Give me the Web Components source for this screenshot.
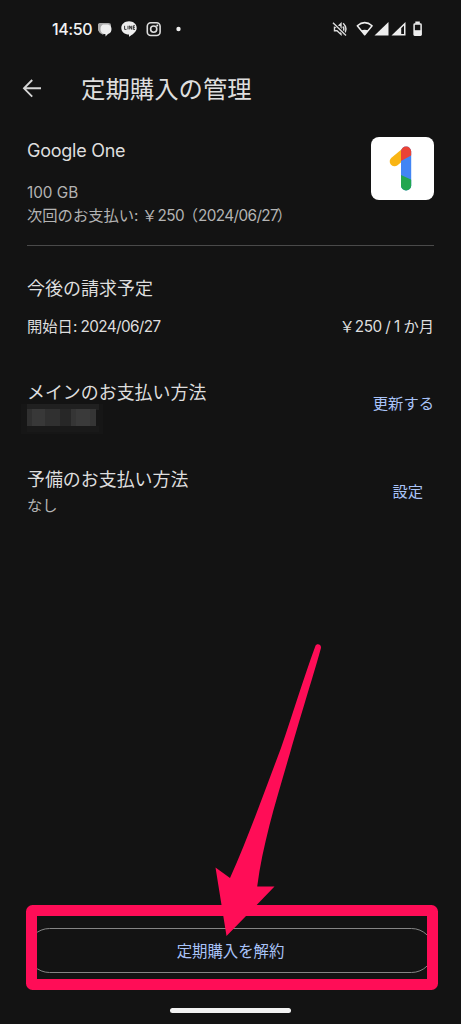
<!DOCTYPE html>
<html lang="ja">
<head>
<meta charset="utf-8">
<title>定期購入の管理</title>
<style>
html,body{margin:0;background:#131313}
body{width:461px;height:1024px;overflow:hidden;font-family:"Noto Sans CJK JP",sans-serif;color:#dedede}
</style>
</head>
<body>
<subscription-screen></subscription-screen>
<script>
function define(name, html){
  const t=document.createElement('template');
  t.innerHTML=html;
  customElements.define(name,class extends HTMLElement{
    constructor(){super();this.attachShadow({mode:'open'}).append(t.content.cloneNode(true));}
  });
}
/* Latin run: own face and tracking inside Japanese text */
define('latin-run',`<style>:host{display:inline;line-height:0;font-family:Inter,"Noto Sans CJK JP",sans-serif;letter-spacing:var(--track,0)}</style><slot></slot>`);

define('status-bar',`<style>
:host{display:block;height:58px;position:relative}
svg{display:block}
.row{display:flex;align-items:center;height:58px;padding-left:52px;box-sizing:border-box}
.time{font:500 16px/20px Inter,sans-serif;letter-spacing:-.4px;width:46px;color:#f2f2f2;white-space:nowrap}
</style>
<div class="row"><span class="time">14:50</span>
<svg width="325" height="24" viewBox="98 17 325 24" fill="#eee">
<path d="M100 23h8.500q2.500 0 2.500 2.300v5q0 2.300-2.500 2.300h-3.500l-2 2.200q-5.500-2-5.500-7.800 0-4 2.500-4z" fill="#aaa"/>
<path d="M103 24.500h5q3.500 1 3.500 4.500 0 4-3.500 5l-2.500 2.500v-2.200q-5-.5-5-5 0-3.800 2.500-4.800z"/>
<path d="M129 21.300c4.300 0 7.700 2.800 7.700 6.600 0 4-4.500 6.600-7.700 8.900v-2.300c-4.300 0-7.700-2.800-7.700-6.600s3.400-6.600 7.700-6.600z"/>
<path d="M124.600 25.800v3.600h1.900M128 25.800v3.600M129.700 29.400v-3.600l2 3.600v-3.600M135 25.800h-1.700v3.600h1.700M133.300 27.600h1.500" fill="none" stroke="#222" stroke-width=".9"/>
<g fill="none" stroke="#ddd" stroke-width="1.600"><rect x="147.300" y="22.700" width="12.800" height="12.800" rx="3.500"/><circle cx="153.700" cy="29.100" r="3.100"/></g><circle cx="157.300" cy="25.500" r="1"/>
<circle cx="178.500" cy="29" r="2.200"/>
<g fill="none" stroke="#ddd" stroke-width="1.400"><path d="M334.500 27.200h2.500l4-3.600v10.800l-4-3.600h-2.500zM342.800 26.500q2.200 2.500 0 5M343.200 23.200q5.600 5.800 0 11.600"/><path d="M333 22.400l13 13" stroke="#131313" stroke-width="3"/><path d="M333 22.800l13 12.800"/></g>
<path d="M357.300 25.800q7.400-6.400 14.800 0l-7.400 9z" fill="none" stroke="#eee" stroke-width="1.500" stroke-linejoin="round"/><path d="M361 30.600q3.700-1.800 7.400 0l-3.700 4.700z"/>
<path d="M388.500 22v13.500h-14z"/>
<path d="M405.500 22v13.500h-14z"/><path d="M401.200 28.200l2.800-2.700v8.500h-2.800z" fill="#131313"/>
<rect x="415.300" y="21.500" width="4.500" height="2.300"/><rect x="414.100" y="24" width="7" height="11.200" rx=".7" fill="none" stroke="#eee" stroke-width="1.500"/><path d="M414 30.200h7.500v5H414z"/>
</svg></div>`);

define('app-bar',`<style>
:host{display:flex;align-items:center;height:62px;padding-left:22px}
svg{display:block;width:20px;height:20px;margin-right:39px}
.t{font-size:24.400px;line-height:36px;margin-top:-2px;white-space:nowrap}
</style><svg viewBox="0 0 20 20" fill="none" stroke="#d6d6d6" stroke-width="1.900"><path d="M19 9.300H2M10.200 1L2 9.300l8.200 8.300"/></svg><div class="t"><slot></slot></div>`);

define('plan-summary',`<style>
:host{display:flex;justify-content:space-between;box-sizing:border-box;height:126px;padding-top:17px;margin:0 27px;border-bottom:1.500px solid #4a4a4a}
.n{font-size:18px;line-height:28px;height:28px;margin:-2px 0 17px}
.d{font-size:15.300px;line-height:22.500px;color:#b4b4b4;white-space:nowrap}
svg{display:block;flex:none}
</style><div><div class="n"><slot name="name"></slot></div><div class="d"><slot name="size"></slot></div><div class="d"><slot name="next"></slot></div></div>
<svg width="63" height="63" viewBox="0 0 63 63"><rect width="63" height="63" rx="8" fill="#fff"/>
<defs><clipPath id="c"><rect x="30" y="9.500" width="10.200" height="44" rx="5.100"/></clipPath></defs>
<path d="M23.500 24.500L35 15" stroke="#f9b514" stroke-width="9.600" stroke-linecap="round"/>
<g clip-path="url(#c)"><path d="M30 9h11v45H30z" fill="#4285f4"/><path d="M30 8h11v10L30 24z" fill="#ea4335"/><path d="M30 38l11 5v12H30z" fill="#22a650"/></g></svg>`);

define('billing-section',`<style>
:host{display:block;margin:0 27px;padding-top:27px;height:57px}
.h{font-size:18px;line-height:28px}.r{display:flex;justify-content:space-between;font-size:15.300px;line-height:24px;margin-top:12px;white-space:nowrap}
</style><div class="h"><slot></slot></div><div class="r"><span><slot name="start"></slot></span><span><slot name="price"></slot></span></div>`);

define('payment-row',`<style>
:host{display:flex;justify-content:space-between;align-items:center;box-sizing:border-box;height:56px;margin:0 27px}
.h{font-size:17.950px;line-height:28px;white-space:nowrap}
.s{font-size:15.300px;line-height:24px;height:24px;color:#b4b4b4}
.a{font-size:15.300px;line-height:24px;color:#a9c3f8;padding-right:var(--inset,0)}
</style><div><div class="h"><slot></slot></div><div class="s"><slot name="detail"></slot></div></div><div class="a"><slot name="action"></slot></div>`);

define('redacted-value',`<style>:host{display:block;margin:-1px 0 0 -6px}svg{display:block}</style>
<svg width="86" height="34" shape-rendering="crispEdges"><path d="M0 0h82v30H0z" fill="#161616"/><path d="M6 0h72v6H6z" fill="#202020"/><path d="M6 5h19v17H6z" fill="#303030"/><path d="M11 5h13v17H11z" fill="#383838"/><path d="M25 5h14v17H25z" fill="#303030"/><path d="M39 5h11v17H39z" fill="#272727"/><path d="M50 5h25v17H50z" fill="#353535"/><path d="M55 5h14v17H55z" fill="#3a3a3a"/><path d="M6 22h72v6H6z" fill="#191919"/></svg>`);

define('outline-button',`<style>
:host{display:flex;align-items:center;justify-content:center;box-sizing:border-box;height:45px;margin:0 27px;padding-bottom:2px;border:1.500px solid #858585;border-radius:23px;font-size:15.400px;line-height:24px;color:#a9c3f8}
</style><slot></slot>`);

define('home-indicator',`<style>:host{display:block;width:121px;height:5px;border-radius:3px;background:#f3f3f3;margin:35px auto 0}</style>`);

define('callout-arrow',`<style>:host{display:block;position:absolute;inset:0;pointer-events:none}svg{display:block}</style>
<svg width="461" height="1024"><rect x="31.500" y="910.500" width="401" height="74" rx="1" fill="none" stroke="#ff0d57" stroke-width="11" stroke-linejoin="round"/>
<path fill="#ff0d57" d="M315.300 646.200C316.500 642.800 321.800 644.300 320.900 648.200C315 670 302 711 290 753C276 801 263 843 257.200 886.600H274.500L226.500 936L215.500 867.500L230 878C248 838 264 793 281 748C293 713 304 677 315.300 646.200Z"/></svg>`);

define('subscription-screen',`<style>
:host{display:flex;flex-direction:column;position:relative;width:461px;height:1024px;background:#131313}
.p1{margin-top:44px}.p2{margin-top:32px}
.foot{height:96px;margin-top:auto}
</style>
<status-bar></status-bar>
<app-bar>定期購入の管理</app-bar>
<plan-summary><latin-run slot="name" style="--track:-.25px">Google One</latin-run><latin-run slot="size" style="--track:0px">100 GB</latin-run><span slot="next">次回のお支払い<latin-run style="--track:-.35px">: </latin-run>￥<latin-run style="--track:-.5px">250</latin-run><span style="margin-left:-1.500px">（</span><latin-run style="--track:-.6px">2024/06/27</latin-run><span style="margin-left:-1.500px">）</span></span></plan-summary>
<billing-section>今後の請求予定<span slot="start">開始日<latin-run style="--track:-.6px">: 2024/06/27</latin-run></span><span slot="price">￥<latin-run style="--track:-.55px">250 / 1 </latin-run>か月</span></billing-section>
<payment-row class="p1">メインのお支払い方法<redacted-value slot="detail"></redacted-value><span slot="action">更新する</span></payment-row>
<payment-row class="p2" style="--inset:11px">予備のお支払い方法<span slot="detail">なし</span><span slot="action">設定</span></payment-row>
<div class="foot"><outline-button>定期購入を解約</outline-button><home-indicator></home-indicator></div>
<callout-arrow></callout-arrow>`);
</script>
</body>
</html>
